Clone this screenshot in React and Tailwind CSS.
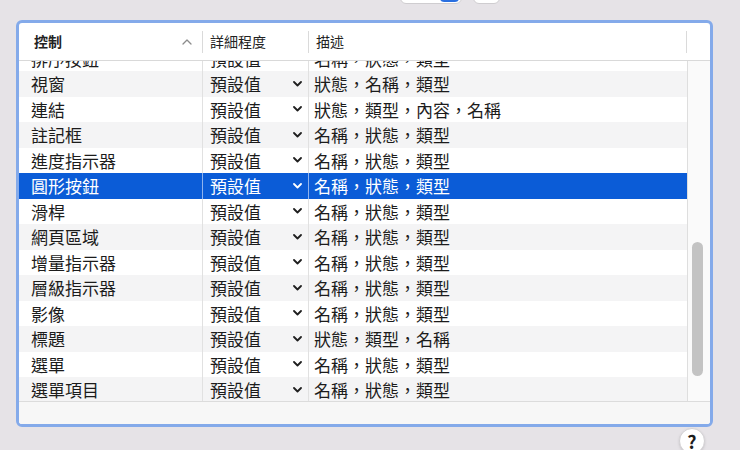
import React from 'react';

const rows = [
  { name: '排序按鈕', desc: '名稱，狀態，類型' },
  { name: '視窗', desc: '狀態，名稱，類型' },
  { name: '連結', desc: '狀態，類型，內容，名稱' },
  { name: '註記框', desc: '名稱，狀態，類型' },
  { name: '進度指示器', desc: '名稱，狀態，類型' },
  { name: '圓形按鈕', desc: '名稱，狀態，類型', selected: true },
  { name: '滑桿', desc: '名稱，狀態，類型' },
  { name: '網頁區域', desc: '名稱，狀態，類型' },
  { name: '增量指示器', desc: '名稱，狀態，類型' },
  { name: '層級指示器', desc: '名稱，狀態，類型' },
  { name: '影像', desc: '名稱，狀態，類型' },
  { name: '標題', desc: '狀態，類型，名稱' },
  { name: '選單', desc: '名稱，狀態，類型' },
  { name: '選單項目', desc: '名稱，狀態，類型' },
];

const ChevronDown = ({ white }) => (
  <svg width="9" height="6" viewBox="0 0 9 6" fill="none">
    <path d="M1 1 L4.5 4.5 L8 1" stroke={white ? '#ffffff' : '#1f1f1f'} strokeWidth="1.8" strokeLinecap="round" strokeLinejoin="round" />
  </svg>
);

const Row = ({ row, index }) => {
  const sel = row.selected;
  const bg = sel ? 'bg-[#0b5cd7] text-white' : index % 2 === 1 ? 'bg-[#f4f4f5] text-[#1c1c1c]' : 'bg-white text-[#1c1c1c]';
  const line = sel ? 'border-[#8fb3ee]' : 'border-[#e1e1e1]';
  return (
    <div className={`flex h-[25.5px] shrink-0 items-center text-[17px] leading-none ${bg}`}>
      <div className={`w-[184px] h-full flex items-center pl-[12px] border-r ${line}`}>{row.name}</div>
      <div className={`w-[106px] h-full flex items-center justify-between pl-[7px] pr-[6px] border-r ${line}`}>
        <span>預設值</span>
        <ChevronDown white={sel} />
      </div>
      <div className="flex-1 h-full flex items-center pl-[5px] whitespace-nowrap">{row.desc}</div>
    </div>
  );
};

export default function App() {
  return (
    <div
      className="w-[740px] h-[450px] bg-[#e6e3e7] overflow-hidden flex flex-col"
      style={{ fontFamily: '"Noto Sans CJK TC", "Noto Sans", sans-serif' }}
    >
      <div className="h-[20px] shrink-0 flex items-start pl-[400px] gap-[11px]">
        <div className="mt-[-22px] h-[26px] w-[62px] bg-white border border-[#cfcdd0] rounded-[6px] flex justify-end pr-[2px] pb-[1px] items-end">
          <div className="w-[19px] h-[20px] bg-[#2a6fe0] rounded-[4px]"></div>
        </div>
        <div className="mt-[-22px] h-[26px] w-[27px] bg-white border border-[#cfcdd0] rounded-[6px]"></div>
      </div>

      <div className="ml-[16px] w-[697px] h-[407px] shrink-0 border-[3.5px] border-[#84aaea] rounded-[6px] bg-white flex flex-col overflow-hidden">
        <div className="h-[38px] shrink-0 flex items-center border-b border-[#d9d9d9] text-[14px] text-[#222]">
          <div className="w-[183px] flex items-center justify-between pl-[15px] pr-[10px]">
            <span className="font-bold">控制</span>
            <svg width="10" height="6" viewBox="0 0 10 6" fill="none">
              <path d="M1 5 L5 1 L9 5" stroke="#8c8c8c" strokeWidth="1.3" strokeLinecap="round" strokeLinejoin="round" />
            </svg>
          </div>
          <div className="w-px h-[22px] bg-[#dadada]"></div>
          <div className="w-[105px] pl-[7px]">詳細程度</div>
          <div className="w-px h-[22px] bg-[#dadada]"></div>
          <div className="w-[377px] pl-[7px]">描述</div>
          <div className="w-px h-[22px] bg-[#dadada]"></div>
          <div className="flex-1"></div>
        </div>

        <div className="h-[340px] shrink-0 flex">
          <div className="w-[669px] h-full border-r border-[#dedede] overflow-hidden flex flex-col">
            <div className="mt-[-15.5px] flex flex-col">
              {rows.map((r, i) => (
                <Row key={r.name} row={r} index={i} />
              ))}
            </div>
          </div>
          <div className="flex-1 bg-[#fafafa] pt-[181px] pl-[4px]">
            <div className="w-[11px] h-[134px] rounded-full bg-[#c3c3c3]"></div>
          </div>
        </div>

        <div className="flex-1 border-t border-[#dcdcdc] bg-[#f7f7f7]"></div>
      </div>

      <div className="flex justify-end pr-[35px] mt-[1px]">
        <div className="w-[26px] h-[26px] rounded-full bg-white border border-[#d3d1d4] shadow-sm flex items-center justify-center text-[18px] font-semibold text-[#1c1c1c] leading-none">
          ?
        </div>
      </div>
    </div>
  );
}
